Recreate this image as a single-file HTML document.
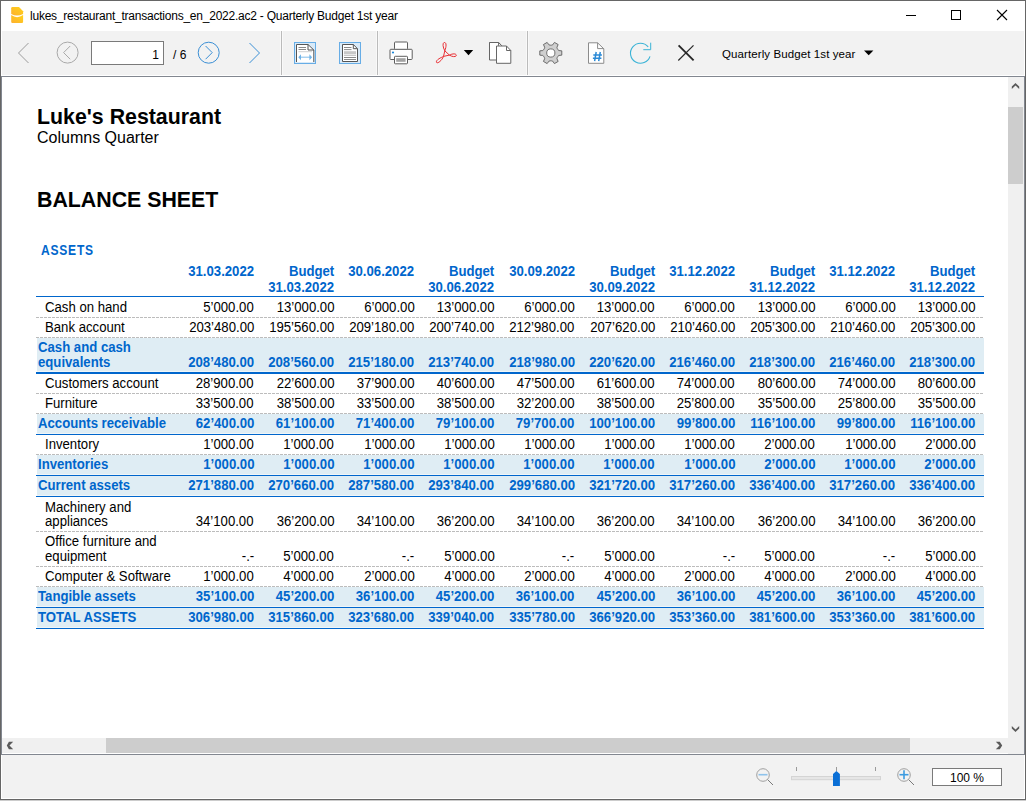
<!DOCTYPE html>
<html><head><meta charset="utf-8">
<style>
* { margin:0; padding:0; box-sizing:border-box; }
html,body { width:1026px; height:801px; overflow:hidden; background:#fff; font-family:"Liberation Sans", sans-serif; }
.abs { position:absolute; }
#win { position:absolute; left:0; top:0; width:1026px; height:800px; border:1px solid #666; background:#fff; }
#title { position:absolute; left:30px; top:9px; font-size:12px; letter-spacing:-0.23px; color:#000; white-space:nowrap; }
#toolbar { position:absolute; left:2px; top:31px; width:1022px; height:44px; background:#f2f2f2; }
.sep { position:absolute; top:31px; width:1px; height:44px; background:#bbbbbb; box-shadow:-1px 0 0 #f9f9f9, 1px 0 0 #f9f9f9; }
#page { position:absolute; left:1px; top:76px; width:1024px; height:679px; background:#fff; border-top:1px solid #828790; border-left:1px solid #828790; border-bottom:1px solid #828790; }
#status { position:absolute; left:2px; top:755px; width:1022px; height:43px; background:#f2f2f2; }
.hd { position:absolute; width:78px; text-align:right; font-size:14px; font-weight:bold; color:#0066cc; line-height:15px; white-space:nowrap; }
.nt { position:absolute; font-size:14px; color:#000; line-height:15px; white-space:nowrap; }
.tt { position:absolute; font-size:14px; font-weight:bold; color:#0066cc; line-height:15px; white-space:nowrap; }
.num { width:78px; text-align:right; }
.sl { display:inline-block; transform:scaleX(0.94); transform-origin:0 50%; }
.sr { display:inline-block; transform:scaleX(0.94); transform-origin:100% 50%; }
.ln { position:absolute; left:36px; width:948px; background:#0066cc; }
.bg { position:absolute; left:37px; width:947px; background:#dfedf4; }
.dt { position:absolute; left:36px; width:948px; height:1px; background:repeating-linear-gradient(90deg,#bcbcbc 0 3px,#fff 3px 4px); }
</style></head><body>
<div id="win"></div>
<div id="title">lukes_restaurant_transactions_en_2022.ac2 - Quarterly Budget 1st year</div>
<div id="toolbar"></div>
<div class="sep" style="left:281px"></div>
<div class="sep" style="left:377px"></div>
<div class="sep" style="left:527px"></div>
<div id="page"></div>
<div class="abs" style="left:37px;top:104.5px;font-size:21.33px;font-weight:bold;line-height:24px;">Luke's Restaurant</div>
<div class="abs" style="left:37px;top:127.8px;font-size:16px;line-height:19px;">Columns Quarter</div>
<div class="abs" style="left:37px;top:187.5px;font-size:21.33px;font-weight:bold;line-height:24px;">BALANCE SHEET</div>
<div class="tt" style="left:41px;top:243px;"><span class="sl" style="transform:scaleX(0.86);letter-spacing:0.9px">ASSETS</span></div>
<div class="hd" style="left:176.0px;top:264px"><span class="sr">31.03.2022</span></div>
<div class="hd" style="left:256.2px;top:264px"><span class="sr">Budget</span></div>
<div class="hd" style="left:256.2px;top:280px"><span class="sr">31.03.2022</span></div>
<div class="hd" style="left:336.3px;top:264px"><span class="sr">30.06.2022</span></div>
<div class="hd" style="left:416.5px;top:264px"><span class="sr">Budget</span></div>
<div class="hd" style="left:416.5px;top:280px"><span class="sr">30.06.2022</span></div>
<div class="hd" style="left:496.7px;top:264px"><span class="sr">30.09.2022</span></div>
<div class="hd" style="left:576.9px;top:264px"><span class="sr">Budget</span></div>
<div class="hd" style="left:576.9px;top:280px"><span class="sr">30.09.2022</span></div>
<div class="hd" style="left:657.0px;top:264px"><span class="sr">31.12.2022</span></div>
<div class="hd" style="left:737.2px;top:264px"><span class="sr">Budget</span></div>
<div class="hd" style="left:737.2px;top:280px"><span class="sr">31.12.2022</span></div>
<div class="hd" style="left:817.4px;top:264px"><span class="sr">31.12.2022</span></div>
<div class="hd" style="left:897.5px;top:264px"><span class="sr">Budget</span></div>
<div class="hd" style="left:897.5px;top:280px"><span class="sr">31.12.2022</span></div>
<div class="ln" style="top:296px;height:1px"></div>
<div class="dt" style="top:317px"></div>
<div class="nt" style="left:45px;top:300px"><span class="sl">Cash on hand</span></div>
<div class="nt num" style="left:176.0px;top:300px"><span class="sr">5’000.00</span></div>
<div class="nt num" style="left:256.2px;top:300px"><span class="sr">13’000.00</span></div>
<div class="nt num" style="left:336.3px;top:300px"><span class="sr">6’000.00</span></div>
<div class="nt num" style="left:416.5px;top:300px"><span class="sr">13’000.00</span></div>
<div class="nt num" style="left:496.7px;top:300px"><span class="sr">6’000.00</span></div>
<div class="nt num" style="left:576.9px;top:300px"><span class="sr">13’000.00</span></div>
<div class="nt num" style="left:657.0px;top:300px"><span class="sr">6’000.00</span></div>
<div class="nt num" style="left:737.2px;top:300px"><span class="sr">13’000.00</span></div>
<div class="nt num" style="left:817.4px;top:300px"><span class="sr">6’000.00</span></div>
<div class="nt num" style="left:897.5px;top:300px"><span class="sr">13’000.00</span></div>
<div class="dt" style="top:337px"></div>
<div class="nt" style="left:45px;top:320px"><span class="sl">Bank account</span></div>
<div class="nt num" style="left:176.0px;top:320px"><span class="sr">203’480.00</span></div>
<div class="nt num" style="left:256.2px;top:320px"><span class="sr">195’560.00</span></div>
<div class="nt num" style="left:336.3px;top:320px"><span class="sr">209’180.00</span></div>
<div class="nt num" style="left:416.5px;top:320px"><span class="sr">200’740.00</span></div>
<div class="nt num" style="left:496.7px;top:320px"><span class="sr">212’980.00</span></div>
<div class="nt num" style="left:576.9px;top:320px"><span class="sr">207’620.00</span></div>
<div class="nt num" style="left:657.0px;top:320px"><span class="sr">210’460.00</span></div>
<div class="nt num" style="left:737.2px;top:320px"><span class="sr">205’300.00</span></div>
<div class="nt num" style="left:817.4px;top:320px"><span class="sr">210’460.00</span></div>
<div class="nt num" style="left:897.5px;top:320px"><span class="sr">205’300.00</span></div>
<div class="bg" style="top:338px;height:33px"></div><div class="bg" style="top:371px;height:1px;background:#eff6f9"></div>
<div class="ln" style="top:372px;height:2px"></div>
<div class="tt" style="left:38px;top:340px"><span class="sl">Cash and cash</span></div>
<div class="tt" style="left:38px;top:355px"><span class="sl">equivalents</span></div>
<div class="tt num" style="left:176.0px;top:355px"><span class="sr">208’480.00</span></div>
<div class="tt num" style="left:256.2px;top:355px"><span class="sr">208’560.00</span></div>
<div class="tt num" style="left:336.3px;top:355px"><span class="sr">215’180.00</span></div>
<div class="tt num" style="left:416.5px;top:355px"><span class="sr">213’740.00</span></div>
<div class="tt num" style="left:496.7px;top:355px"><span class="sr">218’980.00</span></div>
<div class="tt num" style="left:576.9px;top:355px"><span class="sr">220’620.00</span></div>
<div class="tt num" style="left:657.0px;top:355px"><span class="sr">216’460.00</span></div>
<div class="tt num" style="left:737.2px;top:355px"><span class="sr">218’300.00</span></div>
<div class="tt num" style="left:817.4px;top:355px"><span class="sr">216’460.00</span></div>
<div class="tt num" style="left:897.5px;top:355px"><span class="sr">218’300.00</span></div>
<div class="dt" style="top:393px"></div>
<div class="nt" style="left:45px;top:376px"><span class="sl">Customers account</span></div>
<div class="nt num" style="left:176.0px;top:376px"><span class="sr">28’900.00</span></div>
<div class="nt num" style="left:256.2px;top:376px"><span class="sr">22’600.00</span></div>
<div class="nt num" style="left:336.3px;top:376px"><span class="sr">37’900.00</span></div>
<div class="nt num" style="left:416.5px;top:376px"><span class="sr">40’600.00</span></div>
<div class="nt num" style="left:496.7px;top:376px"><span class="sr">47’500.00</span></div>
<div class="nt num" style="left:576.9px;top:376px"><span class="sr">61’600.00</span></div>
<div class="nt num" style="left:657.0px;top:376px"><span class="sr">74’000.00</span></div>
<div class="nt num" style="left:737.2px;top:376px"><span class="sr">80’600.00</span></div>
<div class="nt num" style="left:817.4px;top:376px"><span class="sr">74’000.00</span></div>
<div class="nt num" style="left:897.5px;top:376px"><span class="sr">80’600.00</span></div>
<div class="dt" style="top:413px"></div>
<div class="nt" style="left:45px;top:396px"><span class="sl">Furniture</span></div>
<div class="nt num" style="left:176.0px;top:396px"><span class="sr">33’500.00</span></div>
<div class="nt num" style="left:256.2px;top:396px"><span class="sr">38’500.00</span></div>
<div class="nt num" style="left:336.3px;top:396px"><span class="sr">33’500.00</span></div>
<div class="nt num" style="left:416.5px;top:396px"><span class="sr">38’500.00</span></div>
<div class="nt num" style="left:496.7px;top:396px"><span class="sr">32’200.00</span></div>
<div class="nt num" style="left:576.9px;top:396px"><span class="sr">38’500.00</span></div>
<div class="nt num" style="left:657.0px;top:396px"><span class="sr">25’800.00</span></div>
<div class="nt num" style="left:737.2px;top:396px"><span class="sr">35’500.00</span></div>
<div class="nt num" style="left:817.4px;top:396px"><span class="sr">25’800.00</span></div>
<div class="nt num" style="left:897.5px;top:396px"><span class="sr">35’500.00</span></div>
<div class="bg" style="top:414px;height:19px"></div><div class="bg" style="top:433px;height:1px;background:#eff6f9"></div>
<div class="ln" style="top:434px;height:1px"></div>
<div class="tt" style="left:38px;top:416px"><span class="sl">Accounts receivable</span></div>
<div class="tt num" style="left:176.0px;top:416px"><span class="sr">62’400.00</span></div>
<div class="tt num" style="left:256.2px;top:416px"><span class="sr">61’100.00</span></div>
<div class="tt num" style="left:336.3px;top:416px"><span class="sr">71’400.00</span></div>
<div class="tt num" style="left:416.5px;top:416px"><span class="sr">79’100.00</span></div>
<div class="tt num" style="left:496.7px;top:416px"><span class="sr">79’700.00</span></div>
<div class="tt num" style="left:576.9px;top:416px"><span class="sr">100’100.00</span></div>
<div class="tt num" style="left:657.0px;top:416px"><span class="sr">99’800.00</span></div>
<div class="tt num" style="left:737.2px;top:416px"><span class="sr">116’100.00</span></div>
<div class="tt num" style="left:817.4px;top:416px"><span class="sr">99’800.00</span></div>
<div class="tt num" style="left:897.5px;top:416px"><span class="sr">116’100.00</span></div>
<div class="dt" style="top:454px"></div>
<div class="nt" style="left:45px;top:437px"><span class="sl">Inventory</span></div>
<div class="nt num" style="left:176.0px;top:437px"><span class="sr">1’000.00</span></div>
<div class="nt num" style="left:256.2px;top:437px"><span class="sr">1’000.00</span></div>
<div class="nt num" style="left:336.3px;top:437px"><span class="sr">1’000.00</span></div>
<div class="nt num" style="left:416.5px;top:437px"><span class="sr">1’000.00</span></div>
<div class="nt num" style="left:496.7px;top:437px"><span class="sr">1’000.00</span></div>
<div class="nt num" style="left:576.9px;top:437px"><span class="sr">1’000.00</span></div>
<div class="nt num" style="left:657.0px;top:437px"><span class="sr">1’000.00</span></div>
<div class="nt num" style="left:737.2px;top:437px"><span class="sr">2’000.00</span></div>
<div class="nt num" style="left:817.4px;top:437px"><span class="sr">1’000.00</span></div>
<div class="nt num" style="left:897.5px;top:437px"><span class="sr">2’000.00</span></div>
<div class="bg" style="top:455px;height:19px"></div><div class="bg" style="top:474px;height:1px;background:#eff6f9"></div>
<div class="ln" style="top:475px;height:1px"></div>
<div class="tt" style="left:38px;top:457px"><span class="sl">Inventories</span></div>
<div class="tt num" style="left:176.0px;top:457px"><span class="sr">1’000.00</span></div>
<div class="tt num" style="left:256.2px;top:457px"><span class="sr">1’000.00</span></div>
<div class="tt num" style="left:336.3px;top:457px"><span class="sr">1’000.00</span></div>
<div class="tt num" style="left:416.5px;top:457px"><span class="sr">1’000.00</span></div>
<div class="tt num" style="left:496.7px;top:457px"><span class="sr">1’000.00</span></div>
<div class="tt num" style="left:576.9px;top:457px"><span class="sr">1’000.00</span></div>
<div class="tt num" style="left:657.0px;top:457px"><span class="sr">1’000.00</span></div>
<div class="tt num" style="left:737.2px;top:457px"><span class="sr">2’000.00</span></div>
<div class="tt num" style="left:817.4px;top:457px"><span class="sr">1’000.00</span></div>
<div class="tt num" style="left:897.5px;top:457px"><span class="sr">2’000.00</span></div>
<div class="bg" style="top:476px;height:19px"></div><div class="bg" style="top:495px;height:1px;background:#eff6f9"></div>
<div class="ln" style="top:496px;height:1px"></div>
<div class="tt" style="left:38px;top:478px"><span class="sl">Current assets</span></div>
<div class="tt num" style="left:176.0px;top:478px"><span class="sr">271’880.00</span></div>
<div class="tt num" style="left:256.2px;top:478px"><span class="sr">270’660.00</span></div>
<div class="tt num" style="left:336.3px;top:478px"><span class="sr">287’580.00</span></div>
<div class="tt num" style="left:416.5px;top:478px"><span class="sr">293’840.00</span></div>
<div class="tt num" style="left:496.7px;top:478px"><span class="sr">299’680.00</span></div>
<div class="tt num" style="left:576.9px;top:478px"><span class="sr">321’720.00</span></div>
<div class="tt num" style="left:657.0px;top:478px"><span class="sr">317’260.00</span></div>
<div class="tt num" style="left:737.2px;top:478px"><span class="sr">336’400.00</span></div>
<div class="tt num" style="left:817.4px;top:478px"><span class="sr">317’260.00</span></div>
<div class="tt num" style="left:897.5px;top:478px"><span class="sr">336’400.00</span></div>
<div class="dt" style="top:531px"></div>
<div class="nt" style="left:45px;top:500px"><span class="sl">Machinery and</span></div>
<div class="nt" style="left:45px;top:514px"><span class="sl">appliances</span></div>
<div class="nt num" style="left:176.0px;top:514px"><span class="sr">34’100.00</span></div>
<div class="nt num" style="left:256.2px;top:514px"><span class="sr">36’200.00</span></div>
<div class="nt num" style="left:336.3px;top:514px"><span class="sr">34’100.00</span></div>
<div class="nt num" style="left:416.5px;top:514px"><span class="sr">36’200.00</span></div>
<div class="nt num" style="left:496.7px;top:514px"><span class="sr">34’100.00</span></div>
<div class="nt num" style="left:576.9px;top:514px"><span class="sr">36’200.00</span></div>
<div class="nt num" style="left:657.0px;top:514px"><span class="sr">34’100.00</span></div>
<div class="nt num" style="left:737.2px;top:514px"><span class="sr">36’200.00</span></div>
<div class="nt num" style="left:817.4px;top:514px"><span class="sr">34’100.00</span></div>
<div class="nt num" style="left:897.5px;top:514px"><span class="sr">36’200.00</span></div>
<div class="dt" style="top:566px"></div>
<div class="nt" style="left:45px;top:534px"><span class="sl">Office furniture and</span></div>
<div class="nt" style="left:45px;top:549px"><span class="sl">equipment</span></div>
<div class="nt num" style="left:176.0px;top:549px"><span class="sr">-.-</span></div>
<div class="nt num" style="left:256.2px;top:549px"><span class="sr">5’000.00</span></div>
<div class="nt num" style="left:336.3px;top:549px"><span class="sr">-.-</span></div>
<div class="nt num" style="left:416.5px;top:549px"><span class="sr">5’000.00</span></div>
<div class="nt num" style="left:496.7px;top:549px"><span class="sr">-.-</span></div>
<div class="nt num" style="left:576.9px;top:549px"><span class="sr">5’000.00</span></div>
<div class="nt num" style="left:657.0px;top:549px"><span class="sr">-.-</span></div>
<div class="nt num" style="left:737.2px;top:549px"><span class="sr">5’000.00</span></div>
<div class="nt num" style="left:817.4px;top:549px"><span class="sr">-.-</span></div>
<div class="nt num" style="left:897.5px;top:549px"><span class="sr">5’000.00</span></div>
<div class="dt" style="top:586px"></div>
<div class="nt" style="left:45px;top:569px"><span class="sl">Computer & Software</span></div>
<div class="nt num" style="left:176.0px;top:569px"><span class="sr">1’000.00</span></div>
<div class="nt num" style="left:256.2px;top:569px"><span class="sr">4’000.00</span></div>
<div class="nt num" style="left:336.3px;top:569px"><span class="sr">2’000.00</span></div>
<div class="nt num" style="left:416.5px;top:569px"><span class="sr">4’000.00</span></div>
<div class="nt num" style="left:496.7px;top:569px"><span class="sr">2’000.00</span></div>
<div class="nt num" style="left:576.9px;top:569px"><span class="sr">4’000.00</span></div>
<div class="nt num" style="left:657.0px;top:569px"><span class="sr">2’000.00</span></div>
<div class="nt num" style="left:737.2px;top:569px"><span class="sr">4’000.00</span></div>
<div class="nt num" style="left:817.4px;top:569px"><span class="sr">2’000.00</span></div>
<div class="nt num" style="left:897.5px;top:569px"><span class="sr">4’000.00</span></div>
<div class="bg" style="top:587px;height:19px"></div><div class="bg" style="top:606px;height:1px;background:#eff6f9"></div>
<div class="ln" style="top:607px;height:1px"></div>
<div class="tt" style="left:38px;top:589px"><span class="sl">Tangible assets</span></div>
<div class="tt num" style="left:176.0px;top:589px"><span class="sr">35’100.00</span></div>
<div class="tt num" style="left:256.2px;top:589px"><span class="sr">45’200.00</span></div>
<div class="tt num" style="left:336.3px;top:589px"><span class="sr">36’100.00</span></div>
<div class="tt num" style="left:416.5px;top:589px"><span class="sr">45’200.00</span></div>
<div class="tt num" style="left:496.7px;top:589px"><span class="sr">36’100.00</span></div>
<div class="tt num" style="left:576.9px;top:589px"><span class="sr">45’200.00</span></div>
<div class="tt num" style="left:657.0px;top:589px"><span class="sr">36’100.00</span></div>
<div class="tt num" style="left:737.2px;top:589px"><span class="sr">45’200.00</span></div>
<div class="tt num" style="left:817.4px;top:589px"><span class="sr">36’100.00</span></div>
<div class="tt num" style="left:897.5px;top:589px"><span class="sr">45’200.00</span></div>
<div class="bg" style="top:608px;height:19px"></div><div class="bg" style="top:627px;height:1px;background:#eff6f9"></div>
<div class="ln" style="top:628px;height:1px"></div>
<div class="tt" style="left:38px;top:610px"><span class="sl">TOTAL ASSETS</span></div>
<div class="tt num" style="left:176.0px;top:610px"><span class="sr">306’980.00</span></div>
<div class="tt num" style="left:256.2px;top:610px"><span class="sr">315’860.00</span></div>
<div class="tt num" style="left:336.3px;top:610px"><span class="sr">323’680.00</span></div>
<div class="tt num" style="left:416.5px;top:610px"><span class="sr">339’040.00</span></div>
<div class="tt num" style="left:496.7px;top:610px"><span class="sr">335’780.00</span></div>
<div class="tt num" style="left:576.9px;top:610px"><span class="sr">366’920.00</span></div>
<div class="tt num" style="left:657.0px;top:610px"><span class="sr">353’360.00</span></div>
<div class="tt num" style="left:737.2px;top:610px"><span class="sr">381’600.00</span></div>
<div class="tt num" style="left:817.4px;top:610px"><span class="sr">353’360.00</span></div>
<div class="tt num" style="left:897.5px;top:610px"><span class="sr">381’600.00</span></div>
<div id="status"></div>

<!-- vertical scrollbar -->
<div class="abs" style="left:1008px;top:77px;width:16px;height:677px;background:#f0f0f0"></div>
<div class="abs" style="left:1008px;top:107px;width:15px;height:77px;background:#cdcdcd"></div>
<!-- horizontal scrollbar -->
<div class="abs" style="left:2px;top:738px;width:1006px;height:15px;background:#f0f0f0"></div>
<div class="abs" style="left:106px;top:738px;width:804px;height:15px;background:#cdcdcd"></div>
<div class="abs" style="left:1024px;top:76px;width:1px;height:679px;background:#828790"></div>
<div class="abs" style="left:0;top:800px;width:1026px;height:1px;background:#cccccc"></div>
<svg width="1026" height="801" style="position:absolute;left:0;top:0">
<!-- app icon -->
<defs><linearGradient id="yg" x1="0" y1="1" x2="1" y2="0"><stop offset="0" stop-color="#fdb02e"/><stop offset="1" stop-color="#ffd21a"/></linearGradient></defs><path d="M11.2,8.2 Q11.2,7 12.4,7 L19,7 L23.1,11.2 L23.1,13.9 Q17,17 11.2,13.9 Z" fill="url(#yg)"/>
<path d="M11.2,15.1 Q17,19.3 23.1,15.1 L23.1,21.8 Q23.1,23 21.9,23 L12.4,23 Q11.2,23 11.2,21.8 Z" fill="url(#yg)"/>
<!-- window buttons -->
<line x1="906" y1="15.5" x2="916" y2="15.5" stroke="#000" stroke-width="1"/>
<rect x="951.5" y="10.5" width="9" height="9" fill="none" stroke="#000" stroke-width="1"/>
<path d="M997,10 L1007,20 M1007,10 L997,20" stroke="#000" stroke-width="1.1"/>
<!-- nav -->
<polyline points="28.5,43 18.5,53 28.5,63" fill="none" stroke="#9c9c9c" stroke-width="1"/>
<circle cx="67.6" cy="52.6" r="10.5" fill="none" stroke="#a9a9a9" stroke-width="1"/>
<polyline points="70.2,46 63.6,52.6 70.2,59.2" fill="none" stroke="#a9a9a9" stroke-width="1"/>
<rect x="91.5" y="41.5" width="72" height="23" fill="#fff" stroke="#7a7a7a" stroke-width="1"/>
<circle cx="208.7" cy="52.7" r="10.5" fill="none" stroke="#3b8fd5" stroke-width="1"/>
<polyline points="205.6,46 212.2,52.6 205.6,59.2" fill="none" stroke="#3b8fd5" stroke-width="1"/>
<polyline points="249.5,43 259.5,53 249.5,63" fill="none" stroke="#3b8fd5" stroke-width="1"/>
<!-- fit width icon -->
<rect x="294.5" y="42.5" width="21" height="21" fill="#d9eaf8" stroke="#67ade6" stroke-width="1"/>
<path d="M296.5,62 L296.5,44.5 L308,44.5 L313.8,50 L313.8,62 Z" fill="#fff"/>
<path d="M296.5,62 L296.5,44.5 L308,44.5 L313.8,50 L313.8,62" fill="none" stroke="#555" stroke-width="1"/>
<path d="M308,44.5 L308,50 L313.8,50" fill="none" stroke="#555" stroke-width="1"/>
<line x1="298.5" y1="47.5" x2="306" y2="47.5" stroke="#8a8a8a"/>
<line x1="298.5" y1="49.5" x2="306" y2="49.5" stroke="#8a8a8a"/>
<line x1="298.5" y1="51.7" x2="312" y2="51.7" stroke="#d0d0d0"/>
<line x1="300" y1="57.2" x2="310.5" y2="57.2" stroke="#8cc3ec" stroke-width="1.1"/>
<path d="M298.3,57.2 L301,54.2 L301,60.2 Z M312.1,57.2 L309.4,54.2 L309.4,60.2 Z" fill="#6fb3e8"/>
<!-- full page icon -->
<rect x="339.5" y="42.5" width="21" height="21" fill="#d9eaf8" stroke="#67ade6" stroke-width="1"/>
<path d="M342.5,61.5 L342.5,44.5 L353.3,44.5 L357.5,48.7 L357.5,61.5 Z" fill="#fff" stroke="#555" stroke-width="1"/>
<path d="M353.3,44.5 L353.3,48.7 L357.5,48.7" fill="none" stroke="#555" stroke-width="1"/>
<line x1="344" y1="47.5" x2="351.5" y2="47.5" stroke="#8a8a8a"/>
<line x1="344" y1="49.6" x2="351.5" y2="49.6" stroke="#8a8a8a"/>
<rect x="344" y="51.2" width="12" height="3.2" fill="#c8c8c8"/>
<line x1="344" y1="55.5" x2="356" y2="55.5" stroke="#c8c8c8"/>
<line x1="344" y1="57.5" x2="356" y2="57.5" stroke="#8a8a8a"/>
<line x1="344" y1="59.5" x2="356" y2="59.5" stroke="#8a8a8a"/>
<!-- printer -->
<rect x="394.5" y="42" width="13" height="7.5" rx="0.8" fill="#fff" stroke="#5e5e5e" stroke-width="1"/>
<rect x="390" y="49.3" width="22.2" height="10.2" rx="0.8" fill="#fff" stroke="#5e5e5e" stroke-width="1"/>
<rect x="394.5" y="56.3" width="13" height="7.5" rx="0.8" fill="#fff" stroke="#5e5e5e" stroke-width="1"/>
<rect x="396.2" y="58.2" width="9.4" height="3.6" fill="#a4a4a4"/>
<circle cx="393" cy="52.5" r="1.1" fill="#1e88d8"/>
<!-- acrobat -->
<path d="M444.8,50.8 C442.5,46.5 442.5,42.5 444.5,42.5 C446.5,42.5 446.5,46.5 444.8,50.8 L449.4,55.1 C452.6,53.4 456.3,53.5 456.3,55.3 C456.3,57.1 452.6,57.1 449.4,55.1 L443.5,56.4 C441,57.6 436,59.8 436.4,62.1 C436.9,64.2 441.6,61.2 443.5,56.4 Z" fill="none" stroke="#e8262b" stroke-width="0.95"/>
<polygon points="463.8,50 473.2,50 468.5,55.2" fill="#000"/>
<!-- copy -->
<path d="M489.5,60 L489.5,42.5 L498.6,42.5 L501.8,45.8" fill="#fff" stroke="#666" stroke-width="1"/>
<path d="M489.5,42.5 L498.6,42.5 L501.8,45.8 L501.8,60 L489.5,60 Z" fill="#fff"/>
<path d="M489.5,60 L489.5,42.5 L498.6,42.5 L501.8,45.8 M489.5,60 L496.5,60 M498.6,42.5 L498.6,45.8" fill="none" stroke="#666" stroke-width="1"/>
<path d="M496.5,63.3 L496.5,46 L506.5,46 L510.8,50.5 L510.8,63.3 Z" fill="#fff" stroke="#666" stroke-width="1"/>
<path d="M506.5,46 L506.5,50.5 L510.8,50.5" fill="none" stroke="#666" stroke-width="1"/>
<!-- gear -->
<path d="M558.83,50.54 L561.79,50.86 L561.79,55.14 L558.83,55.46 L558.02,56.21 L557.55,56.90 L557.19,57.64 L556.94,58.73 L558.15,61.45 L554.45,63.59 L552.69,61.18 L551.63,60.86 L550.80,60.80 L549.97,60.86 L548.91,61.18 L547.15,63.59 L543.45,61.45 L544.66,58.73 L544.41,57.64 L544.05,56.90 L543.58,56.21 L542.77,55.46 L539.81,55.14 L539.81,50.86 L542.77,50.54 L543.58,49.79 L544.05,49.10 L544.41,48.36 L544.66,47.27 L543.45,44.55 L547.15,42.41 L548.91,44.82 L549.97,45.14 L550.80,45.20 L551.63,45.14 L552.69,44.82 L554.45,42.41 L558.15,44.55 L556.94,47.27 L557.19,48.36 L557.55,49.10 L558.02,49.79 Z" fill="#cfcfcf" stroke="#5f5f5f" stroke-width="0.9"/>
<circle cx="550.8" cy="53" r="4.1" fill="#fff" stroke="#666" stroke-width="0.9"/>
<!-- doc # -->
<path d="M588.5,63.3 L588.5,42.8 L597.6,42.8 L603.8,48.8 L603.8,63.3 Z" fill="#fff" stroke="#8c8c8c" stroke-width="1"/>
<path d="M597.6,42.8 L597.6,48.6 L603.8,48.6" fill="none" stroke="#8c8c8c" stroke-width="1"/>
<path d="M596.2,52 L594.6,61.2 M600.3,52 L598.7,61.2 M593.3,55 L601.9,55 M592.9,58.2 L601.4,58.2" stroke="#2b8ad6" stroke-width="1.5" fill="none"/>
<!-- refresh -->
<path d="M650.0,56.3 A10,10 0 1 1 648.2,46.8" fill="none" stroke="#3ab3d6" stroke-width="1.1"/>
<path d="M650.7,42.7 L650.7,49.7 L643.3,49.7" fill="none" stroke="#3ab3d6" stroke-width="1"/>
<!-- close x -->
<path d="M678.6,45.4 L693.6,60.4" stroke="#262626" stroke-width="1.9"/>
<path d="M693.5,45.3 L678.3,60.5" stroke="#262626" stroke-width="1.2"/>
<polygon points="864,50.4 873.4,50.4 868.7,55.2" fill="#000"/>
<!-- scrollbar arrows -->
<polygon points="1011.8,86.6 1015.5,82.9 1019.2,86.6 1019.2,89 1015.5,85.5 1011.8,89" fill="#5a5a5a"/>
<polygon points="1011.8,728.4 1015.5,732.1 1019.2,728.4 1019.2,726 1015.5,729.5 1011.8,726" fill="#5a5a5a"/>
<polygon points="8.9,741.8 6.8,745.5 8.9,749.2 11.2,749.2 13.2,749.2 9.5,745.5 13.2,741.8" fill="#5a5a5a"/>
<polygon points="999.8,741.8 1002.2,745.5 999.8,749.2 995.8,749.2 999.5,745.5 995.8,741.8" fill="#5a5a5a"/>
<!-- zoom minus -->
<circle cx="763" cy="775" r="6.3" fill="none" stroke="#a0a0a0" stroke-width="1"/>
<line x1="767.6" y1="779.6" x2="773" y2="785" stroke="#7a7a7a" stroke-width="1"/>
<line x1="758.5" y1="774.7" x2="767.5" y2="774.7" stroke="#8ec3ec" stroke-width="1.6"/>
<!-- slider -->
<rect x="791.5" y="776.5" width="89" height="3.2" fill="#e6e6e6" stroke="#d4d4d4" stroke-width="1"/>
<line x1="796.5" y1="767" x2="796.5" y2="771" stroke="#9a9a9a"/>
<line x1="836.5" y1="767" x2="836.5" y2="771" stroke="#9a9a9a"/>
<line x1="875.5" y1="767" x2="875.5" y2="771" stroke="#9a9a9a"/>
<path d="M833,774 L836.4,771 L839.9,774 L839.9,786 L833,786 Z" fill="#0a6fd6"/>
<!-- zoom plus -->
<circle cx="904" cy="775" r="6.3" fill="none" stroke="#a0a0a0" stroke-width="1"/>
<line x1="908.6" y1="779.6" x2="914" y2="785" stroke="#7a7a7a" stroke-width="1"/>
<line x1="899.5" y1="774.7" x2="908.5" y2="774.7" stroke="#3c9be0" stroke-width="1.6"/>
<line x1="904" y1="770.2" x2="904" y2="779.2" stroke="#3c9be0" stroke-width="1.6"/>
<rect x="932.5" y="768.5" width="69" height="17" fill="#fff" stroke="#7a7a7a" stroke-width="1"/>
</svg>
<div class="abs" style="left:93px;top:46.5px;width:66px;text-align:right;font-size:12px;line-height:16px">1</div>
<div class="abs" style="left:173px;top:46.5px;font-size:12px;line-height:16px">/ 6</div>
<div class="abs" style="left:722px;top:45.8px;font-size:11.5px;letter-spacing:0.1px;line-height:16px">Quarterly Budget 1st year</div>
<div class="abs" style="left:933px;top:769.5px;width:68px;text-align:center;font-size:12px;line-height:16px">100 %</div>
</body></html>
